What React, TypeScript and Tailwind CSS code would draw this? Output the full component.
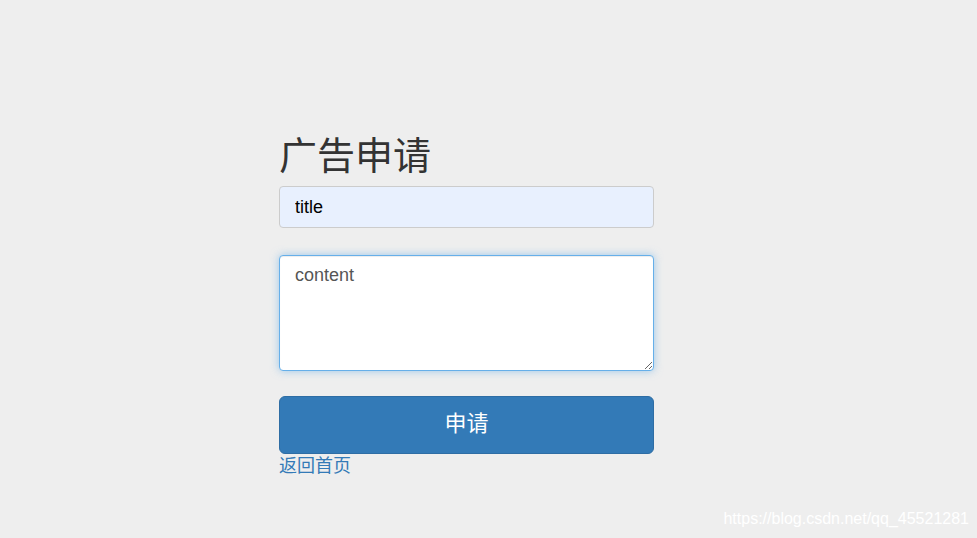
import React from "react";

export default function App() {
  const cjk = { fontFamily: '"Liberation Sans", "Noto Sans CJK SC", Arial, sans-serif' };
  return (
    <div className="relative min-h-[538px] w-full bg-[#eeeeee]" style={cjk}>
      <div className="flex flex-col pl-[279px] pt-[136px]">
        <div className="flex w-[375px] flex-col">
          <h2 className="m-0 text-[38px] leading-[40px] font-normal text-[#333333]">广告申请</h2>
          <input
            className="mt-[10px] h-[42px] w-full rounded-[4px] border border-[#cccccc] bg-[#e8f0fe] px-[15px] text-[18px] text-black outline-none"
            defaultValue="title"
          />
          <textarea
            className="mt-[27px] h-[116px] w-full rounded-[4px] border border-[#66afe9] bg-white px-[15px] pt-[7px] pb-[5px] text-[18px] leading-[24px] text-[#555555] outline-none shadow-[inset_0_1px_1px_rgba(0,0,0,0.075),0_0_8px_rgba(102,175,233,0.6)] placeholder:text-[#555555]"
            placeholder="content"
          />
          <button className="mt-[25px] flex h-[58px] w-full items-center justify-center rounded-[6px] border border-[#2e6da4] bg-[#337ab7] pb-[3px] text-[22px] text-white">
            申请
          </button>
          <a className="self-start text-[18px] leading-[25px] text-[#337ab7]" href="#">
            返回首页
          </a>
        </div>
      </div>
      <div className="absolute bottom-[9px] right-[8px] text-[16px] leading-[20px] text-white">
        https://blog.csdn.net/qq_45521281
      </div>
    </div>
  );
}
